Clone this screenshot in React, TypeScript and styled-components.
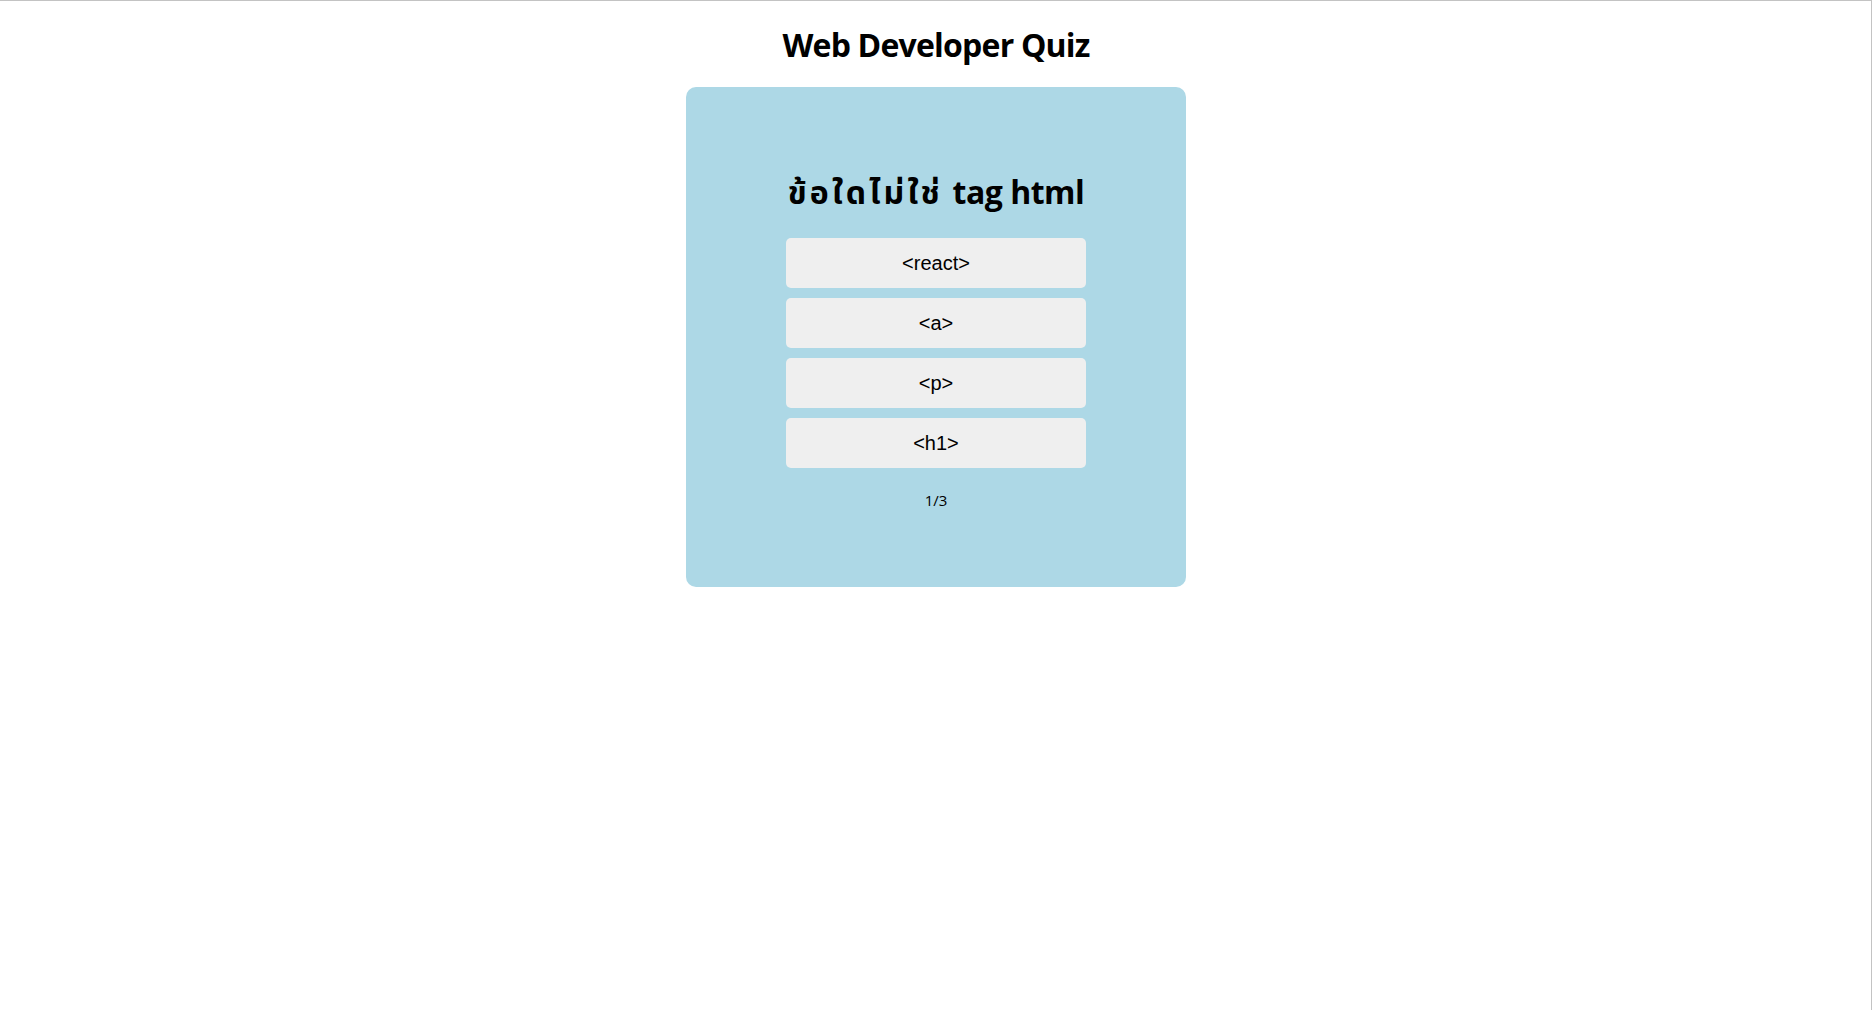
import React from "react";
import styled, { createGlobalStyle } from "styled-components";

const GlobalStyle = createGlobalStyle`
  html, body {
    margin: 0;
    padding: 0;
    background: #ffffff;
  }
  body {
    font-family: "Open Sans", "Noto Sans", "Noto Sans Thai", sans-serif;
    color: #000000;
  }
`;

const Frame = styled.div`
  position: fixed;
  top: 0;
  left: 0;
  right: 1px;
  bottom: 0;
  border-top: 1px solid #c3c3c3;
  border-right: 1px solid #c3c3c3;
  pointer-events: none;
`;

const Page = styled.main`
  display: flex;
  flex-direction: column;
  align-items: center;
  padding-top: 25px;
  padding-right: 1px;
`;

const Title = styled.h1`
  margin: 0 0 22px;
  font-size: 32px;
  line-height: 40px;
  font-weight: 700;
  letter-spacing: -0.8px;
`;

const Card = styled.section`
  box-sizing: border-box;
  width: 500px;
  height: 500px;
  background: #add8e6;
  border-radius: 10px;
  display: flex;
  flex-direction: column;
  align-items: center;
  padding-top: 85px;
`;

const Question = styled.h2`
  margin: 0 0 26px;
  font-size: 32px;
  line-height: 40px;
  font-weight: 700;
  letter-spacing: -0.5px;
  white-space: nowrap;
`;

const ThaiText = styled.span`
  letter-spacing: 3.2px;
  margin-right: 2px;
`;

const Options = styled.div`
  display: flex;
  flex-direction: column;
  gap: 10px;
`;

const Option = styled.button`
  width: 300px;
  height: 50px;
  border: none;
  border-radius: 5px;
  background: #efefef;
  color: #000000;
  font-family: "Liberation Sans", Arial, sans-serif;
  font-size: 20px;
  cursor: pointer;
  padding: 0;
`;

const Progress = styled.p`
  margin: 22px 0 0;
  font-size: 15px;
  line-height: 20px;
`;

const options = ["<react>", "<a>", "<p>", "<h1>"];

export default function App() {
  return (
    <>
      <GlobalStyle />
      <Page>
        <Title>Web Developer Quiz</Title>
        <Card>
          <Question>
            <ThaiText>ข้อใดไม่ใช่</ThaiText> tag html
          </Question>
          <Options>
            {options.map((o) => (
              <Option key={o}>{o}</Option>
            ))}
          </Options>
          <Progress>1/3</Progress>
        </Card>
      </Page>
      <Frame />
    </>
  );
}
